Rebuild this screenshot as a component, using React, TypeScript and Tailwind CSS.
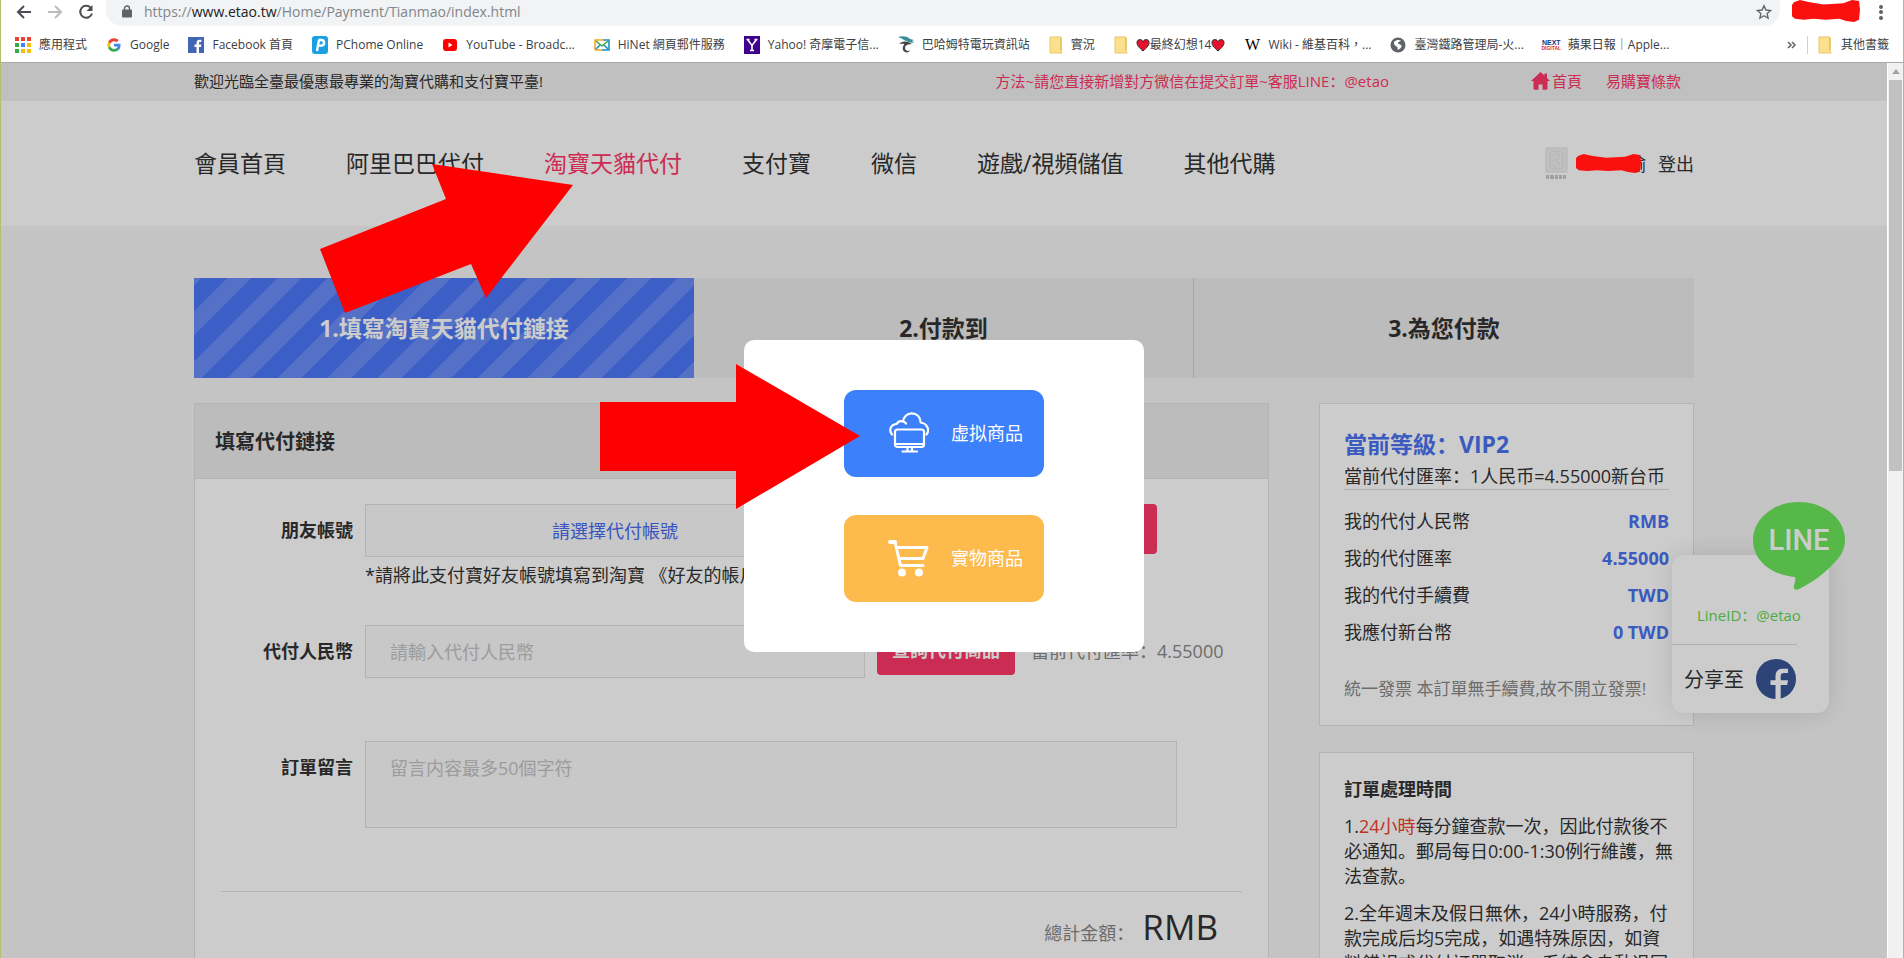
import React from "react";

const navItems = [
    { label: "會員首頁" },
    { label: "阿里巴巴代付" },
    { label: "淘寶天貓代付", active: true },
    { label: "支付寶" },
    { label: "微信" },
    { label: "遊戲/視頻儲值" },
    { label: "其他代購" },
];

const summaryRows = [
    { label: "我的代付人民幣", value: "RMB" },
    { label: "我的代付匯率", value: "4.55000" },
    { label: "我的代付手續費", value: "TWD" },
    { label: "我應付新台幣", value: "0 TWD" },
];

const AppsIcon = () => (
    <svg width="16" height="16" viewBox="0 0 16 16">
        <rect x="0" y="0" width="4" height="4" fill="#ea4335" />
        <rect x="6" y="0" width="4" height="4" fill="#ea4335" />
        <rect x="12" y="0" width="4" height="4" fill="#ea4335" />
        <rect x="0" y="6" width="4" height="4" fill="#34a853" />
        <rect x="6" y="6" width="4" height="4" fill="#4285f4" />
        <rect x="12" y="6" width="4" height="4" fill="#fbbc05" />
        <rect x="0" y="12" width="4" height="4" fill="#34a853" />
        <rect x="6" y="12" width="4" height="4" fill="#fbbc05" />
        <rect x="12" y="12" width="4" height="4" fill="#fbbc05" />
    </svg>
);

const GoogleIcon = () => (
    <svg width="16" height="16" viewBox="0 0 48 48">
        <path fill="#ea4335" d="M24 12.5c3.100 0 5.800 1.100 7.900 3.100l5.900-5.900C34.200 6.300 29.500 4 24 4 16.200 4 9.400 8.500 6.100 15l6.900 5.300C14.600 15.800 18.900 12.500 24 12.500z" />
        <path fill="#4285f4" d="M43.500 24.500c0-1.400-.1-2.700-.4-4H24v8h11c-.5 2.600-1.900 4.700-4.100 6.200l6.700 5.200c3.900-3.600 5.900-9 5.900-15.400z" />
        <path fill="#fbbc05" d="M13 27.700a12 12 0 0 1 0-7.400L6.100 15a20 20 0 0 0 0 18l6.900-5.300z" />
        <path fill="#34a853" d="M24 44c5.400 0 9.900-1.800 13.600-4.900l-6.700-5.200c-1.800 1.200-4.100 2-6.900 2-5.100 0-9.400-3.400-11-7.900L6.100 33C9.400 39.500 16.200 44 24 44z" />
    </svg>
);

const FacebookSquareIcon = () => (
    <svg width="16" height="16" viewBox="0 0 16 16">
        <rect width="16" height="16" fill="#4267b2" />
        <path fill="#fff" d="M11 16v-6h2l.3-2.400H11V6.200c0-.8.3-1.200 1.200-1.200h1.200V2.900c-.3 0-.9-.1-1.700-.1C9.800 2.800 8.500 3.900 8.500 6v1.600h-2V10h2v6z" />
    </svg>
);

const PChomeIcon = () => (
    <svg width="16" height="18" viewBox="0 0 16 18">
        <rect width="16" height="18" rx="3" fill="#1ba1e2" />
        <path d="M6.500 4h2.800a2.600 2.600 0 0 1 0 5.600H6.200M7 4 5 15" fill="none" stroke="#fff" strokeWidth="2.400" />
    </svg>
);

const YoutubeIcon = () => (
    <svg width="16" height="16" viewBox="0 0 16 16">
        <rect x="1" y="2" width="14" height="12" rx="3" fill="#f00" />
        <path d="M6.500 5.500v5l4-2.500z" fill="#fff" />
    </svg>
);

const HiNetIcon = () => (
    <svg width="16" height="16" viewBox="0 0 16 16" fill="none" strokeWidth="1.600">
        <path d="M1 13V3h8" stroke="#f5a623" />
        <path d="M9 3h6v10H8" stroke="#1d8fc4" />
        <path d="M1 13h7" stroke="#f5a623" />
        <path d="m2 4 6 5 6-5" stroke="#45a845" />
        <path d="m2 12 4-4m8 4-4-4" stroke="#1d8fc4" />
    </svg>
);

const YahooIcon = () => (
    <svg width="16" height="18" viewBox="0 0 16 18">
        <rect width="16" height="18" fill="#400090" />
        <path d="m3.500 3.500 4.500 6 4.500-6M8 9v5.500M2.500 3.500h3M10.500 3.500h3M6 14.500h4" fill="none" stroke="#fff" strokeWidth="1.600" />
    </svg>
);

const DragonIcon = () => (
    <svg width="16" height="18" viewBox="0 0 16 18">
        <path d="M0 1c4-1.500 10-1 12 2l4 1-2 1 2 2-4-.5C9 6 7 4 0 1z" fill="#3a8f9b" />
        <path d="M1 8c3-3 6-3 9-2l4 2-4 .5c-3 1-3.500 3-2.500 5 1 1.800 3.500 1.800 4.500.5-.5 3-5.500 3.500-7 0-.7-2 0-4 1.500-6C5 7.500 3 7.500 1 8z" fill="#444" />
    </svg>
);

const FolderIcon = () => (
    <svg width="14" height="18" viewBox="0 0 14 18">
        <path d="M1 1h11v13l1 3H1z" fill="#fbe08e" stroke="#e9c764" />
        <path d="M12 2v12" stroke="#d9b54c" />
    </svg>
);

const WikiIcon = () => (
    <span className="w-4 text-center font-['Liberation_Serif',serif] text-base leading-4 text-black">W</span>
);

const GlobeIcon = () => (
    <svg width="16" height="16" viewBox="0 0 16 16">
        <circle cx="8" cy="8" r="7.500" fill="#5f6368" />
        <path d="M4 5c2-2.500 5-2.500 7-1.500-1 1.500-3 1-3 2.500s4 1 3.500 3.500S8 12.500 7.500 13c0-2 .5-3-1-3.500S3.500 7 4 5z" fill="#fff" />
    </svg>
);

const NextIcon = () => (
    <span className="flex w-[17px] flex-col items-center font-['Liberation_Sans',sans-serif] leading-none font-bold">
        <span className="text-[7px] leading-[7px] text-[#10357f]">NEXT</span>
        <span className="text-[5px] leading-[5px] text-[#d8283c]">DIGITAL</span>
    </span>
);

const Heart = () => (
    <svg className="inline-block align-[-3px]" width="14" height="14" viewBox="0 0 14 14">
        <path d="M7 13C3 9.500 1 7.500 1 4.600 1 1 5.500.5 7 3.600 8.500.5 13 1 13 4.600 13 7.500 11 9.500 7 13z" fill="#e8112d" stroke="#222" />
    </svg>
);

const bookmarks = [
    { icon: <AppsIcon />, label: "應用程式" },
    { icon: <GoogleIcon />, label: "Google" },
    { icon: <FacebookSquareIcon />, label: "Facebook 首頁" },
    { icon: <PChomeIcon />, label: "PChome Online" },
    { icon: <YoutubeIcon />, label: "YouTube - Broadc..." },
    { icon: <HiNetIcon />, label: "HiNet 網頁郵件服務" },
    { icon: <YahooIcon />, label: "Yahoo! 奇摩電子信..." },
    { icon: <DragonIcon />, label: "巴哈姆特電玩資訊站" },
    { icon: <FolderIcon />, label: "實況" },
    { icon: <FolderIcon />, label: <><Heart />最終幻想14<Heart /></> },
    { icon: <WikiIcon />, label: "Wiki - 維基百科，..." },
    { icon: <GlobeIcon />, label: "臺灣鐵路管理局-火..." },
    { icon: <NextIcon />, label: "蘋果日報｜Apple..." },
];

// red marker stroke that hides a name
const Scribble = ({ className }: { className?: string }) => (
    <svg className={className} viewBox="0 0 70 20" preserveAspectRatio="none">
        <path
            d="M2 2 8 0l10 2 14 2 20-1 9-3 7 1 1 8-1 9-5 2-8-1-7-2-14 1-12-1-10 1-9-1-4-3-1-7z"
            fill="#fb1010"
        />
    </svg>
);

const BrowserBar = () => (
    <header className="shrink-0 border-b border-[#a9a9a9] bg-white font-['Open_Sans','Noto_Sans_CJK_TC',sans-serif]">
        <div className="flex h-[26px] items-start overflow-hidden pr-4 pl-3">
            <div className="flex h-6 items-center gap-2">
                <button aria-label="back">
                    <svg width="22" height="20" viewBox="0 0 22 20" fill="none" stroke="#4a4d51" strokeWidth="2">
                        <path d="M18 10H5m6-6-6 6 6 6" />
                    </svg>
                </button>
                <button aria-label="forward">
                    <svg width="22" height="20" viewBox="0 0 22 20" fill="none" stroke="#babcbe" strokeWidth="2">
                        <path d="M5 10h13m-6-6 6 6-6 6" />
                    </svg>
                </button>
                <button aria-label="reload">
                    <svg width="22" height="20" viewBox="0 0 22 20" fill="none" stroke="#4a4d51" strokeWidth="2">
                        <path d="M17.500 5.500A6 6 0 1 0 19 11.500" />
                        <path d="M19.500 3v6h-6z" fill="#4a4d51" stroke="none" />
                    </svg>
                </button>
            </div>
            <div className="ml-[11px] flex h-[26px] flex-1 items-center rounded-b-2xl bg-[#f1f3f4] pr-2 pb-[3px] pl-4">
                <svg width="10" height="13" viewBox="0 0 10 13">
                    <path d="M2.500 5V3.500a2.500 2.500 0 0 1 5 0V5" fill="none" stroke="#5f6368" strokeWidth="1.400" />
                    <rect x="0" y="4.500" width="10" height="8" rx="1" fill="#5f6368" />
                </svg>
                <p className="ml-3 flex-1 text-sm leading-5 text-[#80868b]">
                    https://<span className="text-[#202124]">www.etao.tw</span>/Home/Payment/Tianmao/index.html
                </p>
                <button aria-label="star">
                    <svg width="16" height="16" viewBox="0 0 24 24" fill="none" stroke="#5f6368" strokeWidth="2">
                        <path d="m12 2.500 2.900 6.500 7.100.7-5.300 4.700 1.500 7-6.200-3.700-6.200 3.700 1.500-7L2 9.700 9.100 9z" />
                    </svg>
                </button>
            </div>
            <Scribble className="ml-3 h-[22px] w-[69px]" />
            <button aria-label="menu" className="ml-[14px]">
                <svg width="12" height="24" viewBox="0 0 12 24" fill="#5f6368">
                    <circle cx="6" cy="7" r="2" />
                    <circle cx="6" cy="12" r="2" />
                    <circle cx="6" cy="18" r="2" />
                </svg>
            </button>
        </div>
        <div className="flex h-9 items-center justify-between pt-[2px] pr-[14px] pl-[14px] text-xs text-[#3c4043]">
            <ul className="flex items-center gap-[19px]">
                {bookmarks.map((b, i) => (
                    <li key={i}>
                        <a href="#" className="flex items-center gap-2 whitespace-nowrap">
                            {b.icon}
                            <span>{b.label}</span>
                        </a>
                    </li>
                ))}
            </ul>
            <div className="flex items-center gap-[10px]">
                <svg width="10" height="8" viewBox="0 0 10 8" fill="none" stroke="#5f6368" strokeWidth="1.500">
                    <path d="m1 1 3 3-3 3m4-6 3 3-3 3" />
                </svg>
                <span className="h-[18px] w-px bg-[#d0d0d0]" />
                <a href="#" className="flex items-center gap-[9px]">
                    <FolderIcon />
                    <span>其他書籤</span>
                </a>
            </div>
        </div>
    </header>
);

const TopBar = () => (
    <div className="bg-[#f1f1f1]">
        <div className="mx-auto flex h-[38px] max-w-[1500px] items-center pb-[2px] text-[15px]">
            <p className="flex-1 text-[#333]">歡迎光臨全臺最優惠最專業的淘寶代購和支付寶平臺!</p>
            <div className="flex w-[396px] justify-end overflow-hidden whitespace-nowrap text-[#ff3669]">
                <span>方法~請您直接新增對方微信在提交訂單~客服LINE：@etao</span>
            </div>
            <div className="flex w-[305px] justify-end gap-6 pr-[13px] text-[#ff3669]">
                <a href="#" className="flex items-center gap-[2px]">
                    <svg width="19" height="18" viewBox="0 0 19 18" fill="#ff3669">
                        <path d="M9.500 0 0 9h2.500v7.500c0 .8.500 1.300 1.200 1.300h3.800v-5.300h4v5.300h3.800c.7 0 1.200-.5 1.200-1.300V9H19l-3-3V1.500h-2.500v2z" />
                    </svg>
                    首頁
                </a>
                <a href="#">易購寶條款</a>
            </div>
        </div>
    </div>
);

const SiteHeader = () => (
    <div className="bg-white">
        <div className="mx-auto flex h-[125px] max-w-[1500px] items-center justify-between">
            <nav className="flex gap-15 text-[23px] text-[#333]">
                {navItems.map((item) => (
                    <a key={item.label} href="#" className={item.active ? "text-[#ff3669]" : ""}>
                        {item.label}
                    </a>
                ))}
            </nav>
            <div className="flex items-center text-lg text-[#333]">
                <svg width="23" height="34" viewBox="0 0 23 34" fill="none" stroke="#e2e2e2">
                    <rect x="1" y="1" width="21" height="24" fill="#f0f0f0" />
                    <rect x="5" y="4" width="13" height="18" rx="4" />
                    <path d="m8 9 3-3 4 4-4 4 4 4m-7-4 3-3M8 18l3 2" />
                    <path d="M1 30h3m1 0h4m1 0h3m1 0h3m1 0h3" stroke="#c8c8c8" strokeWidth="4" />
                </svg>
                <span className="relative ml-2 flex w-[70px] justify-end">
                    瑜
                    <Scribble className="absolute top-1 left-0 z-10 h-[19px] w-[66px]" />
                </span>
                <a href="#" className="ml-3">登出</a>
            </div>
        </div>
    </div>
);

const Steps = () => (
    <ol className="grid h-[100px] grid-cols-3 bg-[#ececec] text-[23px] font-bold text-[#333]">
        <li className="flex items-center justify-center bg-[#4a77f8] bg-[linear-gradient(135deg,rgba(255,255,255,0.17)_8%,transparent_8%,transparent_34%,rgba(255,255,255,0.17)_34%,rgba(255,255,255,0.17)_58%,transparent_58%,transparent_84%,rgba(255,255,255,0.17)_84%)] bg-[size:50px_50px] text-white">
            1.填寫淘寶天貓代付鏈接
        </li>
        <li className="flex items-center justify-center border-r border-[#cfcfcf]">2.付款到</li>
        <li className="flex items-center justify-center">3.為您付款</li>
    </ol>
);

const PaymentForm = () => (
    <form className="flex-1 border border-[#e0e0e0] bg-white text-lg">
        <h2 className="flex h-[75px] items-center border-b border-[#e0e0e0] bg-[#ececec] px-5 pt-[2px] text-xl font-bold text-[#333]">
            填寫代付鏈接
        </h2>
        <div className="px-[26px] pt-[25px]">
            <div className="flex">
                <label htmlFor="account" className="w-[132px] pt-3 text-right font-bold text-[#333]">朋友帳號</label>
                <div className="ml-3 w-[500px]">
                    <button id="account" type="button" className="h-[53px] w-full border border-[#e0e0e0] bg-[#fafafa] text-[#4a6af0]">
                        請選擇代付帳號
                    </button>
                    <p className="mt-1 whitespace-nowrap text-[#333]">*請將此支付寶好友帳號填寫到淘寶 《好友的帳戶》</p>
                </div>
                <button type="button" className="ml-3 h-[50px] w-[280px] rounded bg-[#fe3768] font-bold text-white">
                    複製帳號
                </button>
            </div>
            <div className="mt-9 flex items-start">
                <label htmlFor="rmb" className="w-[132px] pt-3 text-right font-bold text-[#333]">代付人民幣</label>
                <input
                    id="rmb"
                    type="text"
                    placeholder="請輸入代付人民幣"
                    className="ml-3 h-[53px] w-[500px] border border-[#e0e0e0] bg-[#fafafa] px-6 placeholder:text-[#c4c4c4]"
                />
                <button type="button" className="ml-3 h-[50px] w-[138px] rounded bg-[#fe3768] font-bold text-white">
                    查詢代付商品
                </button>
                <span className="ml-4 pt-3 text-[#888]">當前代付匯率：4.55000</span>
            </div>
            <div className="mt-[63px] flex items-start">
                <label htmlFor="message" className="w-[132px] pt-3 text-right font-bold text-[#333]">訂單留言</label>
                <textarea
                    id="message"
                    placeholder="留言内容最多50個字符"
                    className="ml-3 h-[87px] w-[812px] resize-none border border-[#e0e0e0] bg-[#fafafa] px-6 py-3 placeholder:text-[#c4c4c4]"
                />
            </div>
            <div className="mt-[63px] flex items-baseline justify-end border-t border-[#e0e0e0] pt-2 pr-6">
                <span className="text-[#888]">總計金額：</span>
                <span className="ml-2 text-[35px] text-[#333]">RMB</span>
            </div>
        </div>
    </form>
);

const Sidebar = () => (
    <aside className="flex w-[375px] flex-col gap-[26px] text-lg whitespace-nowrap text-[#333]">
        <section className="h-[323px] border border-[#e0e0e0] bg-white px-6 pt-5">
            <h3 className="text-[23px] leading-10 font-bold text-[#4a72f0]">當前等級：VIP2</h3>
            <p className="border-b border-[#dcdcdc] leading-[25px]">當前代付匯率：1人民币=4.55000新台币</p>
            <dl className="mt-3">
                {summaryRows.map((row) => (
                    <div key={row.label} className="flex h-[37px] items-center justify-between">
                        <dt>{row.label}</dt>
                        <dd className="font-bold text-[#4a72f0]">{row.value}</dd>
                    </div>
                ))}
            </dl>
            <p className="mt-[26px] text-[17px] text-[#888]">統一發票 本訂單無手續費,故不開立發票!</p>
        </section>
        <section className="border border-[#e0e0e0] bg-white px-6 pt-6 pb-8">
            <h3 className="leading-[25px] font-bold">訂單處理時間</h3>
            <p className="mt-3 leading-[25px]">
                1.<span className="text-[#f0402c]">24小時</span>每分鐘查款一次，因此付款後不<br />
                必通知。郵局每日0:00-1:30例行維護，無<br />
                法查款。
            </p>
            <p className="mt-3 leading-[25px]">
                2.全年週末及假日無休，24小時服務，付<br />
                款完成后均5完成，如遇特殊原因，如資<br />
                料錯誤或代付訂單取消，系統會自動退回
            </p>
        </section>
    </aside>
);

// contact card floating at the right side of the window
const FloatingContact = () => (
    <div className="absolute top-[492px] right-[58px] h-[158px] w-[157px] rounded-xl bg-white shadow-[0_0_25px_rgba(0,0,0,0.12)]">
        <svg className="absolute -top-[53px] left-[81px]" width="92" height="88" viewBox="0 0 92 88">
            <path d="M46 0c25.400 0 46 16.800 46 38 0 9-4 16-10 22-9 10-20 19-35 26.500-4 2.500-7 1-6-3 .8-3 2-7 1-8.500C19 73 0 59 0 38 0 16.800 20.600 0 46 0z" fill="#6be65a" />
            <text x="46" y="48" textAnchor="middle" fontFamily="Roboto, sans-serif" fontSize="29" fontWeight="500" fill="#fff">LINE</text>
        </svg>
        <p className="pt-12 pl-[25px] text-[15px] leading-6 text-[#5fd84e]">LineID：@etao</p>
        <div className="mt-[17px] mr-8 border-t border-[#ddd]" />
        <a href="#" className="mt-[14px] flex items-center gap-3 pl-3 text-xl text-[#333]">
            <span className="pt-[2px]">分享至</span>
            <svg width="40" height="40" viewBox="0 0 40 40">
                <circle cx="20" cy="20" r="20" fill="#375697" />
                <path d="M19.500 40V26h-5v-4.800h5V17c0-4.800 3-7.300 7.200-7.300h5.300v4.400h-3.600c-2.800 0-3.700 1-3.700 3.400v3.700h7.300l-.8 4.800h-6.500v14z" fill="#fff" />
            </svg>
        </a>
    </div>
);

const CloudComputerIcon = () => (
    <svg width="40" height="41" viewBox="0 0 40 41" fill="none" stroke="#fff" strokeWidth="2.200" strokeLinejoin="round" strokeLinecap="round">
        <path d="M3 22.500C-.5 18 1.500 12.500 8 11.800c1-2.200 3.200-3 6-2.300C14.500 5 18 1.300 22.700 1.300c5 0 8.600 3.500 9 9.200 6.500 1 9.300 7.500 5.800 12" />
        <path d="M14 9.500c1.300.2 2.200.9 3 2" />
        <rect x="6" y="17.500" width="29" height="17.500" rx="2.500" />
        <path d="M6 32h29M18.500 35v4m4.500-4v4M13.500 39.500h14.500" />
    </svg>
);

const CartIcon = () => (
    <svg width="41" height="38" viewBox="0 0 41 38" fill="none" stroke="#fff" strokeWidth="3" strokeLinejoin="round" strokeLinecap="round">
        <path d="M2 3h5" strokeWidth="4" />
        <path d="m7 3 5.500 23.500H35" />
        <path d="M8.500 8.500h30.500L35 19.500H11" />
        <circle cx="14" cy="33.500" r="4" fill="#fff" stroke="none" />
        <circle cx="31" cy="33.500" r="4" fill="#fff" stroke="none" />
    </svg>
);

const ProductModal = () => (
    <div className="absolute inset-0 flex items-start justify-center bg-black/20 pt-[277px]">
        <div role="dialog" className="flex h-[312px] w-[400px] flex-col items-center justify-center gap-[38px] rounded-[10px] bg-white text-lg text-white">
            <button className="flex h-[87px] w-[200px] items-center gap-[22px] rounded-xl bg-[#3d80fb] pb-[2px] pl-[45px]">
                <CloudComputerIcon />
                虚拟商品
            </button>
            <button className="flex h-[87px] w-[200px] items-center gap-[22px] rounded-xl bg-[#fdbb4e] pb-[2px] pl-11">
                <CartIcon />
                實物商品
            </button>
        </div>
    </div>
);

const ScrollBar = () => (
    <div className="flex w-4 shrink-0 flex-col items-center border-l border-white bg-[#f1f1f1]">
        <svg className="my-[6px]" width="8" height="5" viewBox="0 0 8 5">
            <path d="M4 0 8 5H0z" fill="#a3a3a3" />
        </svg>
        <div className="h-[391px] w-[13px] bg-[#c1c1c1]" />
    </div>
);

const App = () => {
    return (
        <div className="relative flex h-screen flex-col overflow-hidden border-x border-[#b4bf6a] bg-white">
            <BrowserBar />
            <div className="flex min-h-0 flex-1">
                <main className="relative min-w-0 flex-1 overflow-hidden bg-[#f5f5f5] font-['Open_Sans','Noto_Sans_CJK_SC',sans-serif]">
                    <TopBar />
                    <SiteHeader />
                    <div className="mx-auto mt-[52px] max-w-[1500px]">
                        <Steps />
                        <div className="mt-[25px] flex gap-[50px]">
                            <PaymentForm />
                            <Sidebar />
                        </div>
                    </div>
                    <FloatingContact />
                    <ProductModal />
                </main>
                <ScrollBar />
            </div>
            <svg className="absolute top-[164px] left-[319px]" width="253" height="149" viewBox="0 0 253 149">
                <path d="M112 0 253 21 166 134 151 100 25 149 0 85 126 35z" fill="#f00" />
            </svg>
            <svg className="absolute top-[364px] left-[599px]" width="260" height="145" viewBox="0 0 260 145">
                <path d="M0 38h136V0l124 72-124 73v-38H0z" fill="#f00" />
            </svg>
        </div>
    );
};

export default App;
